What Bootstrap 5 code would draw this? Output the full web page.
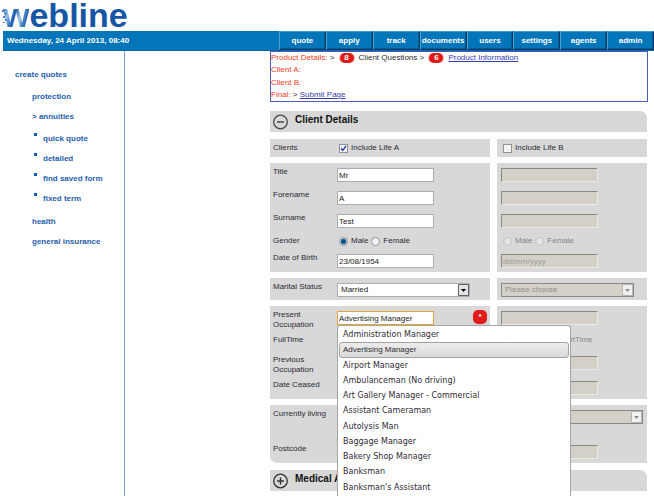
<!DOCTYPE html>
<html lang="en">
<head>
<meta charset="utf-8">
<meta name="viewport" content="width=device-width, initial-scale=1">
<title>webline - Client Details</title>
<link href="https://cdn.jsdelivr.net/npm/bootstrap@5.3.0/dist/css/bootstrap.min.css" rel="stylesheet">
<style>
  body { font-family: "Liberation Sans", Arial, sans-serif; font-size: 8px; line-height: 10px; color: #2b2b33; background: #fff; }
  .brand { font-size: 34px; line-height: 31px; font-weight: 700; color: #1756a6; padding-left: 3px; text-decoration: none; }
  .brand-w { background: linear-gradient(105deg, #2c6cb4 8%, #9cc3e6 26%, #3b7bc0 38%, #1d5dab 46%, #a9cdec 62%, #3a78bd 76%, #1756a6 92%); -webkit-background-clip: text; background-clip: text; color: transparent; }
  .brand-bits { left: 2px; top: 8px; }
  .topbar { background: #0375b9; margin-left: 3px; height: 20px; color: #fff; font-weight: 700; border-bottom: 1px solid #0668a6; }
  .topnav { width: 375px; }
  .topnav .tab { flex: 1 1 0; color: #fff; text-align: center; text-decoration: none; line-height: 17px; border: 1px solid; border-color: #3f9bd0 #043a66 #043a66 #4ba3d6; box-shadow: inset -1px -1px 0 #055b94; white-space: nowrap; }
  .side { width: 122px; margin-left: 3px; border-right: 1px solid #7f9fd8; min-height: 445px; padding: 14px 0 0 12px; font-weight: 700; line-height: 20px; }
  .side a { color: #2560ab; text-decoration: none; }
  .side ul { list-style: none; margin: 0; padding: 2px 0 0 17px; }
  .side ul ul { padding: 2px 0 3px 2px; }
  .side ul ul li { display: flex; gap: 6px; }
  .side ul ul li::before { content: ""; width: 3px; height: 3px; margin-top: 4px; background: #0a5fae; }
  .content-col { margin-left: 145px; padding-right: 6px; }
  .trail { border: 1px solid #4a5cc0; min-height: 51px; display: grid; align-content: space-between; grid-auto-rows: 12px; line-height: 12px; margin-bottom: 9px; }
  .trail .part { color: #ee3a1a; }
  .trail a { color: #3440b0; text-decoration: underline; }
  .count { display: inline-block; width: 14px; margin: 0 5px 0 3px; border-radius: 5px; background: #e01919; color: #fff; line-height: 10px; text-align: center; font-weight: 700; box-shadow: -1px 0 0 #f3b9b0, 1px 0 0 #f3b9b0; }
  .panel-head { background: #d8d8d8; border-radius: 0 7px 0 0; min-height: 21px; padding: 0 3px; gap: 7px; font-size: 10px; font-weight: 700; line-height: 18px; color: #111; margin: 0 1px 0 0; }
  .panel-head.next { margin-top: 7px; }
  .panel-head .toggle { border: 0; background: none; padding: 3px 0 0; line-height: 0; height: 19px; }
  .band { display: grid; grid-template-columns: 220fr 150fr; gap: 7px; margin: 6px 1px 0 0; }
  .panel-head + form .band:first-child { margin-top: 7px; }
  .cell { background: #d8d8d8; padding: 4px 3px 4px 4px; }
  .cell.first { padding-left: 3px; }
  .cell.round { border-bottom-left-radius: 7px; }
  .cell.tight { padding-bottom: 3px; }
  .line { display: flex; min-height: 15px; }
  .line > .cap { width: 64px; flex: none; white-space: nowrap; }
  .line.h-check { min-height: 10px; }
  .line.h-17 { min-height: 17px; }
  .line.h-20 { min-height: 20px; }
  .line.h-23 { min-height: 23px; }
  .line.h-25 { min-height: 25px; }
  .line.h-35 { min-height: 35px; }
  .box, .pick { margin-top: 1px; height: 14px; border: 1px solid #a9adb3; border-radius: 0; background: #fff; color: #222; font-size: 8px; line-height: 12px; padding: 0 1px; flex: none; }
  .box { width: 97px; }
  .box:disabled, .pick:disabled { background: #d4d0c8; border-color: #8b8882 #eceae6 #eceae6 #8b8882; color: #8f8f8f; opacity: 1; }
  .box::placeholder { color: #9b9b9b; }
  .box.active { border: 1px solid #e0a53a; outline: 0; }
  .pick-wrap { position: relative; width: 133px; flex: none; }
  .pick-wrap.wide { width: 142px; }
  .pick { width: 100%; appearance: none; padding: 0 14px 0 3px; display: block; }
  .pick:disabled { border-color: #8b8882; }
  .pick-arrow { position: absolute; right: 1px; top: 2px; pointer-events: none; }
  .opts { display: flex; align-items: center; padding-left: 2px; gap: 3px; height: 10px; }
  .opts input { appearance: none; width: 9px; height: 9px; margin: 0; border: 1px solid #8e9299; background: #f4f4f4; flex: none; }
  .opts input[type=radio] { border-radius: 50%; }
  .opts input[type=radio]:checked { background: radial-gradient(circle, #0f4f80 0 2px, #9fc6e2 3px, #f4f4f4 4px); }
  .opts input[type=checkbox]:checked { background: #f4f4f4 url("data:image/svg+xml,%3Csvg xmlns='http://www.w3.org/2000/svg' viewBox='0 0 7 7'%3E%3Cpath d='M1 3.2 2.8 5.4 6 .8' fill='none' stroke='%232a3f9a' stroke-width='1.4'/%3E%3C/svg%3E"); }
  .opts input:disabled { border-color: #c2c2c2; background: #e4e4e4; }
  .opts.off label { color: #858585; }
  .need { width: 14px; height: 14px; border-radius: 5px; background: #e21b1b; color: #fff; font-weight: 700; text-align: center; line-height: 14px; margin: 0 0 0 auto; }
  .suggest { position: absolute; left: 0; top: 15px; width: 234px; z-index: 5; background: #fff; border: 1px solid #a6a6a6; border-bottom: 0; border-radius: 3px 3px 0 0; padding: 1px; margin: 0; list-style: none; display: grid; grid-auto-rows: 1fr; height: 171px; font-family: "DejaVu Sans", Verdana, sans-serif; color: #2f2a33; }
  .suggest li { padding: 0 3px; border: 1px solid transparent; line-height: 13px; }
  .suggest .on { font-family: "Liberation Sans", Arial, sans-serif; border-color: #a2a2a2; border-radius: 3px; background: linear-gradient(#ececec, #dadada); }
</style>
<script src="https://cdn.jsdelivr.net/npm/bootstrap@5.3.0/dist/js/bootstrap.bundle.min.js"></script>
</head>
<body>
<header>
  <div class="position-relative d-flex">
    <a class="brand" href="#"><span class="brand-w">w</span>ebline</a>
    <svg class="brand-bits position-absolute" width="8" height="18" viewBox="0 0 8 18" aria-hidden="true">
      <path d="M0 2h2v2H0zM3 5h2v2H3zM1 8h2v2H1zM3 11h2v2H3zM1 14h2v1H1z" fill="#4d8ac8"/>
    </svg>
  </div>
  <div class="topbar d-flex justify-content-between">
    <div class="ps-1 text-nowrap align-self-center">Wednesday, 24 April 2013, 08:40</div>
    <nav class="topnav d-flex">
      <a class="tab" href="#">quote</a><a class="tab" href="#">apply</a><a class="tab" href="#">track</a><a class="tab" href="#">documents</a><a class="tab" href="#">users</a><a class="tab" href="#">settings</a><a class="tab" href="#">agents</a><a class="tab" href="#">admin</a>
    </nav>
  </div>
</header>
<div class="d-flex">
  <nav class="side flex-shrink-0">
    <a href="#">create quotes</a>
    <ul>
      <li><a href="#">protection</a></li>
      <li><a href="#">&gt; annuities</a>
        <ul>
          <li><a href="#">quick quote</a></li>
          <li><a href="#">detailed</a></li>
          <li><a href="#">find saved form</a></li>
          <li><a href="#">fixed term</a></li>
        </ul>
      </li>
      <li><a href="#">health</a></li>
      <li><a href="#">general insurance</a></li>
    </ul>
  </nav>
  <main class="content-col flex-grow-1">
    <div class="trail">
      <div><span class="part">Product Details:</span> &gt; <span class="count">8</span>Client Questions &gt; <span class="count">6</span><a href="#">Product Information</a></div>
      <div class="part">Client A:</div>
      <div class="part">Client B:</div>
      <div><span class="part">Final:</span> &gt; <a href="#">Submit Page</a></div>
    </div>
    <h2 class="panel-head d-flex">
      <button class="toggle" type="button" aria-label="Collapse Client Details"><svg width="15" height="16" viewBox="0 0 15 16"><circle cx="7.500" cy="8" r="6.800" fill="none" stroke="#4a4a4a" stroke-width="1.300"/><path d="M4 8h7" stroke="#4a4a4a" stroke-width="1.500"/></svg></button>
      <span>Client Details</span>
    </h2>
    <form>
      <div class="band">
        <div class="cell first">
          <div class="line h-check"><span class="cap">Clients</span><span class="opts"><input type="checkbox" id="lifeA" checked><label for="lifeA">Include Life A</label></span></div>
        </div>
        <div class="cell">
          <div class="line h-check"><span class="opts"><input type="checkbox" id="lifeB"><label for="lifeB">Include Life B</label></span></div>
        </div>
      </div>
      <div class="band">
        <div class="cell first">
          <div class="line h-23"><label class="cap" for="titleA">Title</label><input class="box" id="titleA" value="Mr"></div>
          <div class="line h-23"><label class="cap" for="foreA">Forename</label><input class="box" id="foreA" value="A"></div>
          <div class="line h-23"><label class="cap" for="surA">Surname</label><input class="box" id="surA" value="Test"></div>
          <div class="line h-17"><span class="cap">Gender</span><span class="opts"><input type="radio" name="gA" id="gAm" checked><label for="gAm">Male</label><input type="radio" name="gA" id="gAf"><label for="gAf">Female</label></span></div>
          <div class="line"><label class="cap" for="dobA">Date of Birth</label><input class="box" id="dobA" value="23/08/1954"></div>
        </div>
        <div class="cell">
          <div class="line h-23"><input class="box" aria-label="Title, Life B" disabled></div>
          <div class="line h-23"><input class="box" aria-label="Forename, Life B" disabled></div>
          <div class="line h-23"><input class="box" aria-label="Surname, Life B" disabled></div>
          <div class="line h-17"><span class="opts off"><input type="radio" name="gB" id="gBm" disabled><label for="gBm">Male</label><input type="radio" name="gB" id="gBf" disabled><label for="gBf">Female</label></span></div>
          <div class="line"><input class="box" aria-label="Date of Birth, Life B" placeholder="dd/mm/yyyy" disabled></div>
        </div>
      </div>
      <div class="band">
        <div class="cell first tight">
          <div class="line"><label class="cap" for="marA">Marital Status</label>
            <div class="pick-wrap"><select class="pick" id="marA"><option>Married</option></select><svg class="pick-arrow" width="11" height="12" viewBox="0 0 11 12"><path d="M.5.500h10v11H.5z" fill="#e3e3e3" stroke="#5d6066"/><path d="M3 5h5L5.500 8z" fill="#000"/></svg></div>
          </div>
        </div>
        <div class="cell tight">
          <div class="line"><div class="pick-wrap"><select class="pick" aria-label="Marital Status, Life B" disabled><option>Please choose</option></select><svg class="pick-arrow" width="11" height="12" viewBox="0 0 11 12"><path d="M.5.500h10v11H.5z" fill="#f1f1f1" stroke="#b5b5b5"/><path d="M3 5h5L5.500 8z" fill="#8c8c8c"/></svg></div></div>
        </div>
      </div>
      <div class="band">
        <div class="cell first">
          <div class="line h-25"><label class="cap" for="occA">Present<br>Occupation</label>
            <div class="position-relative d-flex flex-grow-1 align-items-start">
              <input class="box active" id="occA" value="Advertising Manager" autocomplete="off">
              <span class="need">*</span>
              <ul class="suggest" role="listbox" aria-label="Occupations">
                <li>Administration Manager</li>
                <li class="on">Advertising Manager</li>
                <li>Airport Manager</li>
                <li>Ambulanceman (No driving)</li>
                <li>Art Gallery Manager - Commercial</li>
                <li>Assistant Cameraman</li>
                <li>Autolysis Man</li>
                <li>Baggage Manager</li>
                <li>Bakery Shop Manager</li>
                <li>Banksman</li>
                <li>Banksman's Assistant</li>
              </ul>
            </div>
          </div>
          <div class="line h-20"><span class="cap">FullTime</span></div>
          <div class="line h-25"><span class="cap">Previous<br>Occupation</span></div>
          <div class="line"><span class="cap">Date Ceased</span></div>
        </div>
        <div class="cell">
          <div class="line h-25"><input class="box" aria-label="Present Occupation, Life B" disabled></div>
          <div class="line h-20"><span class="opts off"><input type="radio" name="ft" id="ftF" disabled><label for="ftF">FullTime</label><input type="radio" name="ft" id="ftP" disabled><label for="ftP">PartTime</label></span></div>
          <div class="line h-25"><input class="box" aria-label="Previous Occupation, Life B" disabled></div>
          <div class="line"><input class="box" aria-label="Date Ceased, Life B" disabled></div>
        </div>
      </div>
      <div class="band">
        <div class="cell first round">
          <div class="line h-35"><span class="cap">Currently living</span></div>
          <div class="line"><span class="cap">Postcode</span></div>
        </div>
        <div class="cell">
          <div class="line h-35"><div class="pick-wrap wide"><select class="pick" aria-label="Currently living, Life B" disabled><option></option></select><svg class="pick-arrow" width="11" height="12" viewBox="0 0 11 12"><path d="M.5.500h10v11H.5z" fill="#f1f1f1" stroke="#b5b5b5"/><path d="M3 5h5L5.500 8z" fill="#8c8c8c"/></svg></div></div>
          <div class="line"><input class="box" aria-label="Postcode, Life B" disabled></div>
        </div>
      </div>
    </form>
    <h2 class="panel-head next d-flex">
      <button class="toggle" type="button" aria-label="Expand Medical"><svg width="15" height="16" viewBox="0 0 15 16"><circle cx="7.500" cy="8" r="6.800" fill="none" stroke="#333" stroke-width="1.300"/><path d="M4 8h7M7.500 4.500v7" stroke="#333" stroke-width="1.500"/></svg></button>
      <span>Medical A</span>
    </h2>
  </main>
</div>
</body>
</html>
